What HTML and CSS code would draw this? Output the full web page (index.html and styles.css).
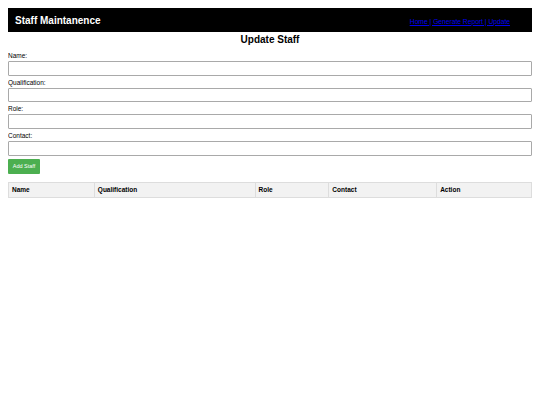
FILE: index.html
```html
<!DOCTYPE html>
<html>
<head>
<meta charset="utf-8">
<link rel="stylesheet" href="styles.css">
</head>
<body>
<header class="topbar">
  <h1 class="brand">Staff Maintanence</h1>
  <nav class="nav"><a href="#">Home</a> | <a href="#">Generate Report</a> | <a href="#">Update</a></nav>
</header>
<h2 class="page-title">Update Staff</h2>
<form class="staff-form">
  <label class="field-label">Name:</label>
  <input class="field-input" type="text">
  <label class="field-label">Qualification:</label>
  <input class="field-input" type="text">
  <label class="field-label">Role:</label>
  <input class="field-input" type="text">
  <label class="field-label">Contact:</label>
  <input class="field-input" type="text">
  <button class="btn-add" type="button">Add Staff</button>
</form>
<table class="staff-table">
  <thead>
    <tr>
      <th class="c-name">Name</th>
      <th class="c-qual">Qualification</th>
      <th class="c-role">Role</th>
      <th class="c-contact">Contact</th>
      <th class="c-action">Action</th>
    </tr>
  </thead>
</table>
</body>
</html>
```
FILE: styles.css
```css
html, body { margin: 0; padding: 0; background: #fff; }
body {
  margin: 8px;
  font-family: "Liberation Sans", Arial, sans-serif;
  color: #000;
}
.topbar {
  background: #000;
  color: #fff;
  height: 24px;
  display: flex;
  align-items: center;
  justify-content: space-between;
  padding: 0 22px 0 7px;
}
.brand {
  margin: 0;
  font-size: 10px;
  font-weight: bold;
}
.nav {
  font-size: 6.7px;
  color: #0000ee;
  padding-top: 2px;
  text-decoration: underline;
}
.nav a { color: #0000ee; text-decoration: underline; }
.page-title {
  margin: 1px 0 6px;
  text-align: center;
  font-size: 10px;
  font-weight: bold;
  line-height: 13px;
}
.staff-form {
  display: flex;
  flex-direction: column;
  align-items: flex-start;
}
.field-label {
  font-size: 6.5px;
  line-height: 8px;
  margin-bottom: 1px;
}
.field-input {
  box-sizing: border-box;
  width: 100%;
  height: 14.5px;
  margin: 0 0 3.2px;
  border: 1px solid #a9a9a9;
  border-radius: 1px;
  padding: 0 3px;
  font-size: 7px;
}
.btn-add {
  margin-top: 0;
  width: 32px;
  height: 15px;
  background: #4caf50;
  color: #fff;
  border: none;
  border-radius: 1px;
  font-family: "Liberation Sans", Arial, sans-serif;
  font-size: 5.5px;
  padding: 0;
}
.staff-table {
  margin-top: 8px;
  width: 100%;
  border-collapse: collapse;
}
.staff-table th {
  background: #f2f2f2;
  border: 1px solid #ddd;
  text-align: left;
  font-size: 6.5px;
  font-weight: bold;
  height: 15px;
  padding: 0 3px;
  box-sizing: border-box;
}
.c-name { width: 86px; }
.c-qual { width: 161px; }
.c-role { width: 74px; }
.c-contact { width: 108px; }
.c-action { width: 95px; }
```
